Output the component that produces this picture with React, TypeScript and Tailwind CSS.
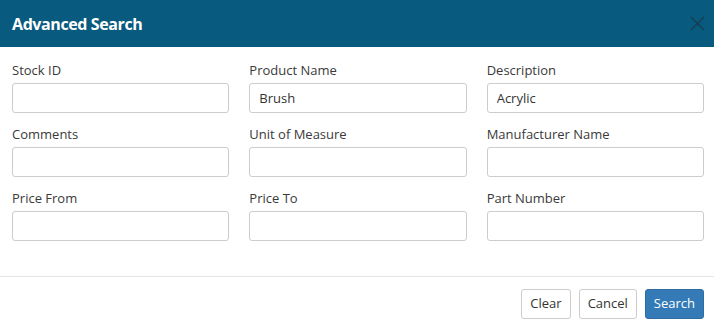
import React from "react";

const fields = [
  { label: "Stock ID", value: "" },
  { label: "Product Name", value: "Brush" },
  { label: "Description", value: "Acrylic" },
  { label: "Comments", value: "" },
  { label: "Unit of Measure", value: "" },
  { label: "Manufacturer Name", value: "" },
  { label: "Price From", value: "" },
  { label: "Price To", value: "" },
  { label: "Part Number", value: "" },
];

const App: React.FC = () => {
  return (
    <div
      className="w-[714px] h-[329px] bg-white flex flex-col text-[#333]"
      style={{ fontFamily: '"Open Sans", "Noto Sans", sans-serif' }}
    >
      <div className="h-[47px] bg-[#085a7e] flex items-center justify-between pl-3 pr-[9px]">
        <h1 className="text-white text-[16px] font-bold tracking-[-0.4px]">Advanced Search</h1>
        <button className="w-[16px] h-[16px] flex items-center justify-center">
          <svg width="15" height="15" viewBox="0 0 15 15">
            <path d="M1 1 L14 14 M14 1 L1 14" stroke="#163c4f" strokeWidth="1.4" />
          </svg>
        </button>
      </div>
      <div className="grid grid-cols-3 gap-x-5 gap-y-[11px] pl-3 pr-[10px] pt-[13px] pb-[35px] border-b border-[#e5e5e5]">
        {fields.map((f) => (
          <div key={f.label} className="flex flex-col">
            <label className="text-[13px] leading-[20px] mb-[3px] text-[#3a3a3a]">{f.label}</label>
            <input
              className="h-[30px] border border-[#ccc] rounded-[3px] px-[9px] text-[13px] text-[#333] outline-none"
              defaultValue={f.value}
            />
          </div>
        ))}
      </div>
      <div className="flex justify-end gap-2 px-[10px] pt-3">
        <button className="h-[30px] px-[8px] border border-[#ccc] rounded-[3px] text-[13px] text-[#333] bg-white">
          Clear
        </button>
        <button className="h-[30px] px-[8px] border border-[#ccc] rounded-[3px] text-[13px] text-[#333] bg-white">
          Cancel
        </button>
        <button className="h-[30px] px-[8px] border border-[#2e6da4] rounded-[3px] text-[13px] text-white bg-[#337ab7]">
          Search
        </button>
      </div>
    </div>
  );
};

export default App;
